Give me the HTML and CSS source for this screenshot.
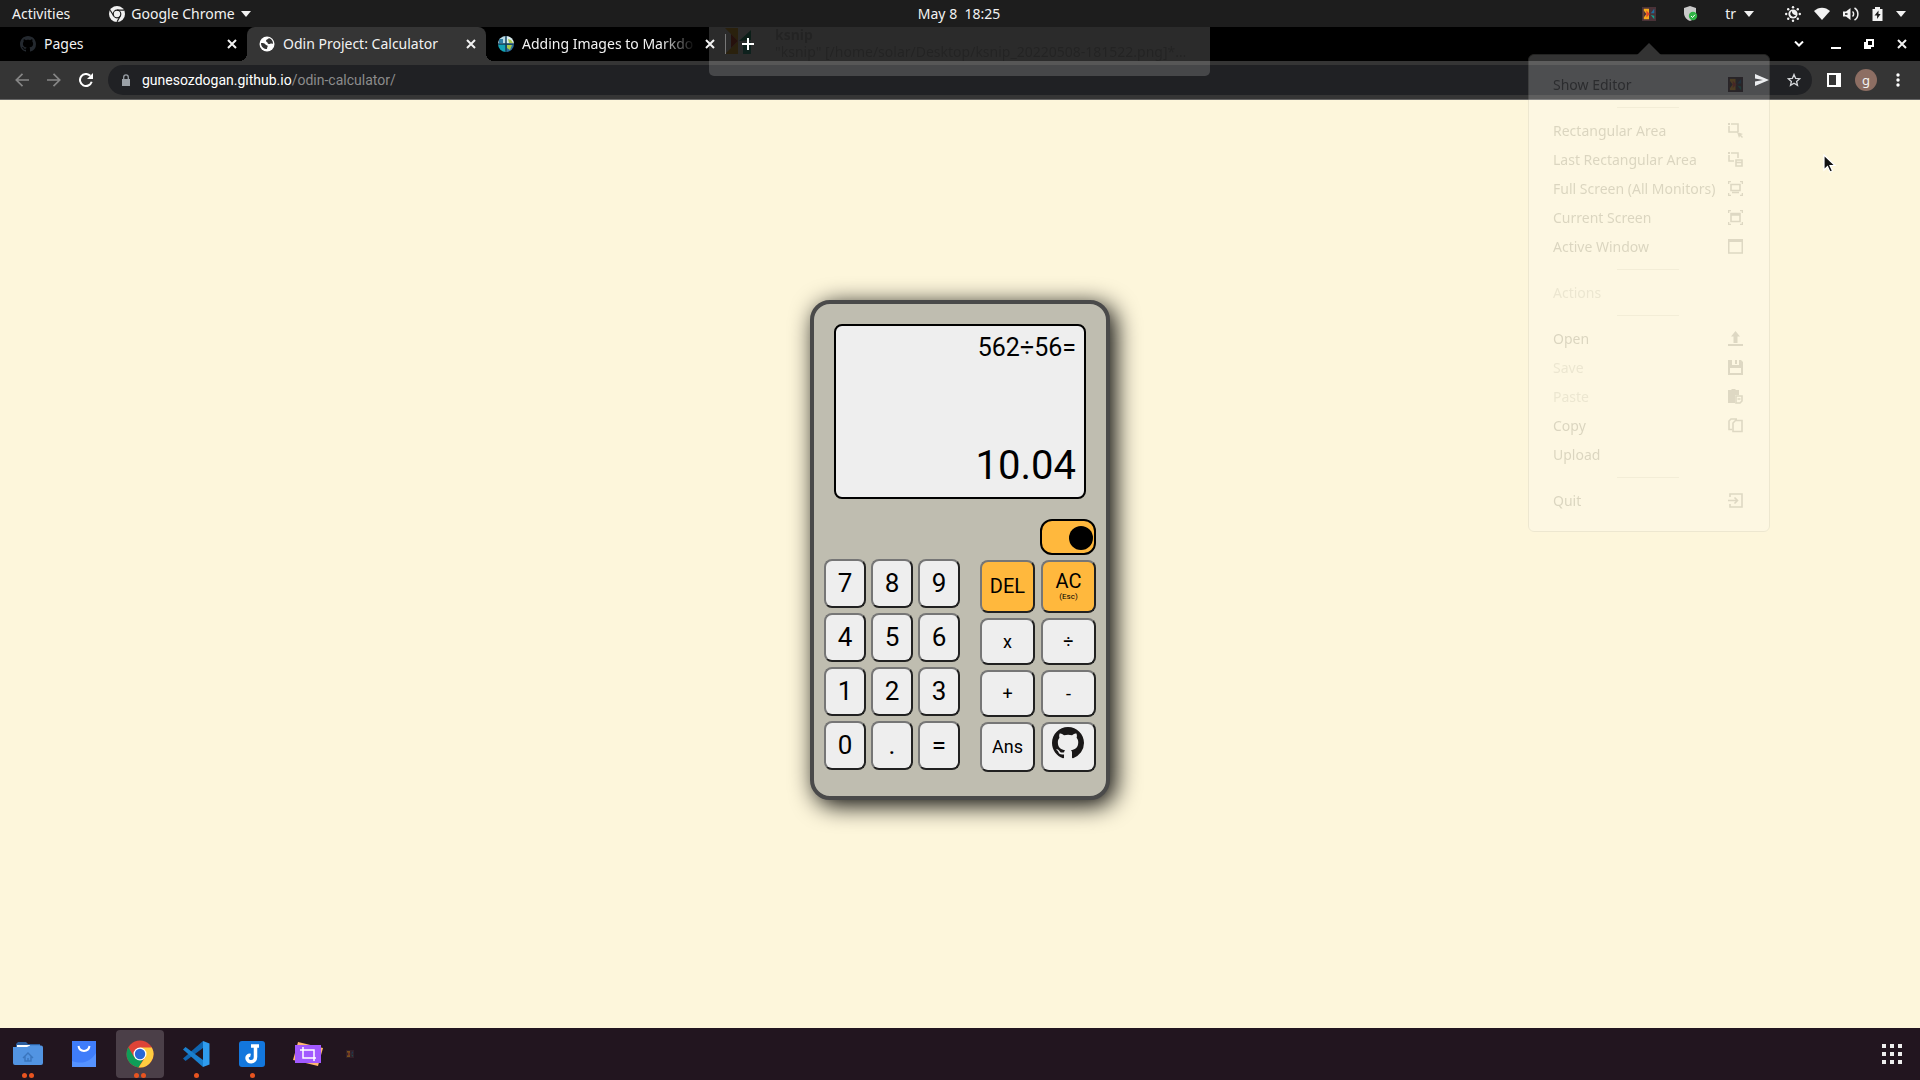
FILE: index.html
```html
<!DOCTYPE html>
<html lang="en">
<head>
<meta charset="utf-8">
<title>Odin Project: Calculator</title>
<link rel="stylesheet" href="styles.css">
</head>
<body>
<svg class="defs" aria-hidden="true">
  <defs>
    <symbol id="github" viewBox="0 0 16 16"><path d="M8 0C3.58 0 0 3.58 0 8c0 3.54 2.29 6.53 5.47 7.59.4.07.55-.17.55-.38 0-.19-.01-.82-.01-1.49-2.01.37-2.53-.49-2.69-.94-.09-.23-.48-.94-.82-1.13-.28-.15-.68-.52-.01-.53.63-.01 1.08.58 1.23.82.72 1.21 1.87.87 2.33.66.07-.52.28-.87.51-1.07-1.78-.2-3.64-.89-3.64-3.95 0-.87.31-1.59.82-2.15-.08-.2-.36-1.02.08-2.12 0 0 .67-.21 2.2.82.64-.18 1.32-.27 2-.27s1.36.09 2 .27c1.53-1.04 2.2-.82 2.2-.82.44 1.1.16 1.92.08 2.12.51.56.82 1.27.82 2.15 0 3.07-1.87 3.75-3.65 3.95.29.25.54.73.54 1.48 0 1.07-.01 1.93-.01 2.2 0 .21.15.46.55.38A8.01 8.01 0 0 0 16 8c0-4.42-3.58-8-8-8z"/></symbol>
    <symbol id="close" viewBox="0 0 10 10"><path d="M1 1l8 8M9 1l-8 8" fill="none" stroke="currentColor" stroke-width="2"/></symbol>
    <symbol id="caret" viewBox="0 0 10 6"><path d="M0 0h10L5 6z" fill="currentColor"/></symbol>
    <symbol id="ksnip" viewBox="0 0 16 16"><path fill="#4a3238" d="M0 0h16v16H0z"/><path fill="#f6a81c" d="M2 2h6v12H2z"/><path fill="#4a3238" d="M2 4l3 4-3 4z"/><path fill="#e2432a" d="M5 4l4 4-4 4z"/><path fill="#1d6f9e" d="M10 7l4-5v5z"/><path fill="#12a08c" d="M10 9l4 5v-4z"/></symbol>
  </defs>
</svg>

<header class="panel">
  <div class="panel-left">
    <button class="panel-item" type="button">Activities</button>
    <button class="panel-item app" type="button">
      <svg width="16" height="16" viewBox="0 0 16 16"><circle cx="8" cy="8" r="8" fill="#f2f2f2"/><g fill="none" stroke="#1d1d1d" stroke-width="1.2"><circle cx="8" cy="8" r="3.8"/><path d="M8 4.2h7M4.8 10L1.2 4.3M11.3 10L8 15.8"/></g></svg>
      Google Chrome
      <svg width="10" height="6"><use href="#caret"/></svg>
    </button>
  </div>
  <time class="clock">May 8&nbsp; 18:25</time>
  <div class="panel-right">
    <svg width="14" height="14"><use href="#ksnip"/></svg>
    <svg width="15" height="16" viewBox="0 0 15 16"><path fill="#c9c9c9" d="M7 0l6 2v5c0 4-3 7-6 8-3-1-6-4-6-8V2z"/><circle cx="10" cy="10" r="4.2" fill="#2fb344"/><path d="M8 10l1.5 1.500L12 8.700" fill="none" stroke="#fff"/></svg>
    <span class="lang">tr <svg width="10" height="6"><use href="#caret"/></svg></span>
    <span class="status">
      <svg width="16" height="16" viewBox="0 0 16 16"><circle cx="8" cy="8" r="4.600" fill="#f2f2f2"/><path d="M7 5a3 3 0 1 0 4 4 3.500 3.500 0 0 1-4-4z" fill="#1d1d1d"/><g fill="#f2f2f2"><circle cx="8" cy="1.200" r="1.200"/><circle cx="8" cy="14.800" r="1.200"/><circle cx="1.200" cy="8" r="1.200"/><circle cx="14.800" cy="8" r="1.200"/><circle cx="3.200" cy="3.200" r="1.200"/><circle cx="12.800" cy="12.800" r="1.200"/><circle cx="12.800" cy="3.200" r="1.200"/><circle cx="3.200" cy="12.800" r="1.200"/></g></svg>
      <svg width="16" height="14" viewBox="0 0 16 14"><path fill="#f2f2f2" d="M0 4c4.500-4.500 11.500-4.500 16 0L8 13z"/></svg>
      <svg width="16" height="14" viewBox="0 0 16 14"><path fill="#f2f2f2" d="M0 4.500h3L7.500 1v12L3 9.500H0z"/><path d="M2 6.200h2.500v1.600H2z" fill="#1d1d1d"/><path d="M9.500 4.500c1.500 1.200 1.500 3.800 0 5M11.500 1c4.500 2.500 4.500 9.500 0 12" fill="none" stroke="#f2f2f2" stroke-width="1.500"/></svg>
      <svg width="11" height="14" viewBox="0 0 11 14"><path fill="#f2f2f2" d="M3 0h5v2h2.500v12H.5V2H3z"/><path d="M6.500 3.500L2.500 8.500h2.600v3.500l3.500-5H6.500z" fill="#1d1d1d"/></svg>
      <svg width="10" height="6"><use href="#caret"/></svg>
    </span>
  </div>
</header>

<section class="browser">
  <nav class="tabs">
    <div class="tab">
      <svg class="favicon dim" width="16" height="16"><use href="#github"/></svg>
      <span class="tab-title">Pages</span>
      <button class="icon-btn" type="button" aria-label="Close Pages"><svg width="10" height="10"><use href="#close"/></svg></button>
    </div>
    <div class="tab active">
      <svg class="favicon" width="16" height="16" viewBox="0 0 16 16"><circle cx="8" cy="8" r="7.500" fill="#fff"/><path fill="#353535" d="M2 7c2 0 4 0 4.500 1.500.5 1 2 .5 2.200 1.600.1.900-.7 1.200-.7 2.900-3 0-6-2-6-6zM8 3.500c1-.5 1-1.500 2.500-1.300C12.500 3 14 5 14 7.500c-1 .5-2-.3-2.700.2-.9.600-2.500.3-2.700-.8C8.500 6 7 6 7 5c0-.7.4-1.200 1-1.500z"/></svg>
      <span class="tab-title">Odin Project: Calculator</span>
      <button class="icon-btn" type="button" aria-label="Close calculator"><svg width="10" height="10"><use href="#close"/></svg></button>
    </div>
    <div class="tab">
      <svg class="favicon" width="16" height="16" viewBox="0 0 16 16"><clipPath id="round"><circle cx="8" cy="8" r="8"/></clipPath><g clip-path="url(#round)"><path fill="#b9dbe6" d="M0 0h8v8H0z"/><path fill="#dceef2" d="M8 0h8v8H8z"/><path fill="#13a3b5" d="M0 8h8v8H0z"/><path fill="#2d6f9e" d="M8 8h8v8H8z"/><path d="M1 3h4v4H1z" fill="#2f7fa6"/><path fill="#a8c94a" d="M9 9l5 0-2 5-3-2zM10 3l3 1 2 3h-4z"/><path d="M0 8h16M8 0v16" stroke="#123f5a" stroke-width="1.500"/></g></svg>
      <span class="tab-title fade">Adding Images to Markdo</span>
      <button class="icon-btn" type="button" aria-label="Close Adding Images"><svg width="10" height="10"><use href="#close"/></svg></button>
    </div>
    <button class="icon-btn new-tab" type="button" aria-label="New tab"><svg width="12" height="12" viewBox="0 0 12 12"><path d="M6 0v12M0 6h12" stroke="#fff" stroke-width="2"/></svg></button>
    <div class="window-controls">
      <button class="icon-btn search-tabs" type="button" aria-label="Search tabs"><svg width="10" height="6" viewBox="0 0 10 6"><path d="M1 0.500l4 4 4-4" fill="none" stroke="#fff" stroke-width="2"/></svg></button>
      <button class="icon-btn" type="button" aria-label="Minimize"><svg width="10" height="10" viewBox="0 0 10 10"><path d="M0 9h10" stroke="#fff" stroke-width="2"/></svg></button>
      <button class="icon-btn" type="button" aria-label="Restore"><svg width="10" height="10" viewBox="0 0 10 10"><path d="M3 1h6v6H3zM1 3v6h6" fill="none" stroke="#fff" stroke-width="2"/></svg></button>
      <button class="icon-btn" type="button" aria-label="Close window"><svg width="10" height="10"><use href="#close"/></svg></button>
    </div>
  </nav>

  <div class="toolbar">
    <button class="icon-btn faded" type="button" aria-label="Back"><svg width="14" height="14" viewBox="0 0 14 14"><path d="M14 7H1.500M7.500 .8L1.300 7l6.200 6.200" fill="none" stroke="currentColor" stroke-width="1.700"/></svg></button>
    <button class="icon-btn faded" type="button" aria-label="Forward"><svg width="14" height="14" viewBox="0 0 14 14"><path d="M0 7h12.500M6.500 .8L12.700 7l-6.200 6.200" fill="none" stroke="currentColor" stroke-width="1.700"/></svg></button>
    <button class="icon-btn" type="button" aria-label="Reload"><svg width="14" height="14" viewBox="0 0 14 14"><path d="M12.700 8.800A6 6 0 1 1 11.300 2.800" fill="none" stroke="#fff" stroke-width="2"/><path d="M14 0v6H8z" fill="#fff"/></svg></button>
    <div class="address">
      <svg width="10" height="12" viewBox="0 0 10 12"><path d="M1 5h8v7H1z" fill="#9aa0a6"/><path d="M2.700 5V3.200a2.300 2.300 0 0 1 4.600 0V5" fill="none" stroke="#9aa0a6" stroke-width="1.300"/></svg>
      <a class="url" href="#calculator">gunesozdogan.github.io<span>/odin-calculator/</span></a>
      <button class="icon-btn" type="button" aria-label="Send"><svg width="14" height="12" viewBox="0 0 14 12"><path d="M0 0l14 6-14 6V7.500L8 6 0 4.500z" fill="#e8eaed"/></svg></button>
      <button class="icon-btn" type="button" aria-label="Bookmark"><svg width="14" height="14" viewBox="0 0 14 14"><path d="M7 1.500l1.600 3.800 4.100.4-3.100 2.700.9 4L7 10.300l-3.500 2.100.9-4L1.300 5.700l4.100-.4z" fill="none" stroke="#d5d7da" stroke-width="1.300"/></svg></button>
    </div>
    <div class="tools">
      <button class="icon-btn" type="button" aria-label="Side panel"><svg width="14" height="14" viewBox="0 0 14 14"><path d="M1 1h12v12H1z" fill="none" stroke="#fff" stroke-width="2"/><path d="M9 1h4v12H9z" fill="#fff"/></svg></button>
      <button class="avatar" type="button">g</button>
      <button class="icon-btn" type="button" aria-label="Menu"><svg width="4" height="14" viewBox="0 0 4 14"><g fill="#fff"><circle cx="2" cy="2" r="1.700"/><circle cx="2" cy="7" r="1.700"/><circle cx="2" cy="12" r="1.700"/></g></svg></button>
    </div>
  </div>
</section>

<main class="page" id="calculator">
  <div class="calculator">
    <div class="screen">
      <output class="expression">562÷56=</output>
      <output class="result">10.04</output>
    </div>
    <div class="switch-row"><input class="switch" type="checkbox" checked aria-label="Theme"></div>
    <div class="keys">
      <div class="digits">
        <button type="button">7</button><button type="button">8</button><button type="button">9</button>
        <button type="button">4</button><button type="button">5</button><button type="button">6</button>
        <button type="button">1</button><button type="button">2</button><button type="button">3</button>
        <button type="button">0</button><button type="button">.</button><button type="button">=</button>
      </div>
      <div class="operators">
        <button class="clear" type="button">DEL</button><button class="clear" type="button">AC<small>(Esc)</small></button>
        <button type="button">x</button><button type="button">÷</button>
        <button type="button">+</button><button type="button">-</button>
        <button type="button">Ans</button><button class="repo" type="button" aria-label="GitHub"><svg width="32" height="32" fill="#191717"><use href="#github"/></svg></button>
      </div>
    </div>
  </div>
</main>

<footer class="dock">
  <button class="launcher" type="button" aria-label="Files">
    <svg width="30" height="26" viewBox="0 0 30 26"><path fill="#2c5e9e" d="M5 1h8l2 2h12v6H3V3z"/><path fill="#fff" d="M4 4h22v4H4z"/><path fill="#3f7fc9" d="M17 4h10v2H17z"/><path fill="#5294e2" d="M0 6h14l3-1.500h11a2 2 0 0 1 2 2V22a2 2 0 0 1-2 2H2a2 2 0 0 1-2-2z"/><path d="M10 17l5-5 5 5M12 15.500V20h6v-4.500M15 20v-3" fill="none" stroke="#3a75bd" stroke-width="1.400"/></svg>
    <i></i><i></i>
  </button>
  <button class="launcher" type="button" aria-label="Software">
    <svg width="24" height="26" viewBox="0 0 24 26"><path fill="#3f7dfa" d="M0 0h24v26H0z"/><path fill="#5592ff" d="M0 20c11 4 19 0 24-8v14H0z"/><path d="M6.500 5c1 6.500 10 6.500 11 0" fill="none" stroke="#fff" stroke-width="2"/></svg>
  </button>
  <button class="launcher current" type="button" aria-label="Google Chrome">
    <svg width="28" height="28" viewBox="0 0 28 28"><circle cx="14" cy="14" r="13.500" fill="#dd4437"/><path fill="#0f9d58" d="M2.300 7.200L8.200 17.300 14 20l3 0-4.500 7.400A13.500 13.500 0 0 1 2.300 7.200z"/><path fill="#ffcd40" d="M14 7.500h11.800A13.500 13.500 0 0 1 12.500 27.400l7-10.500z"/><circle cx="14" cy="14" r="6.500" fill="#fff"/><circle cx="14" cy="14" r="5.200" fill="#2966d6"/></svg>
    <i></i><i></i>
  </button>
  <button class="launcher" type="button" aria-label="Visual Studio Code">
    <svg width="27" height="26" viewBox="0 0 27 26"><path fill="#0f65b0" d="M20 0L0 17.500 2.500 20 20 7z"/><path fill="#1a80cf" d="M20 26L0 8.500 2.500 6 20 19z"/><path fill="#2f9cee" d="M20 0l6.500 2.500v21L20 26z"/></svg>
    <i></i>
  </button>
  <button class="launcher" type="button" aria-label="Joplin">
    <svg width="26" height="26" viewBox="0 0 26 26"><rect width="26" height="26" rx="3" fill="#1377dd"/><path d="M12 5h8M16.500 5v11c0 6.500-8.500 6-8.500 1 0-2 1.500-3 3.500-2.500" fill="none" stroke="#fff" stroke-width="3.500"/></svg>
    <i></i>
  </button>
  <button class="launcher" type="button" aria-label="Screenshot">
    <svg width="30" height="26" viewBox="0 0 30 26"><path fill="#ffb871" d="M5 1l25 6-5 18L0 19z"/><path fill="#a259ff" d="M2 4h26v18H2z"/><path d="M7 9h14v11M10 6v11h13" fill="none" stroke="#fff" stroke-width="1.500"/></svg>
  </button>
  <svg class="starting" width="8" height="8"><use href="#ksnip"/></svg>
  <button class="apps" type="button" aria-label="Show applications">
    <svg width="20" height="20" viewBox="0 0 20 20"><path fill="#eee" d="M0 0h4v4H0zM8 0h4v4H8zM16 0h4v4h-4zM0 8h4v4H0zM8 8h4v4H8zM16 8h4v4h-4zM0 16h4v4H0zM8 16h4v4H8zM16 16h4v4h-4z"/></svg>
  </button>
</footer>

<!-- Fading desktop overlays -->
<aside class="toast">
  <svg width="26" height="26" viewBox="0 0 26 26"><path fill="#f6c04c" d="M0 0h13v13zM0 26h13V13z"/><path fill="#e2634a" d="M6 6l7 7-7 7z"/><path fill="#4bb08e" d="M14 13L26 2v10z"/><path fill="#52c0ac" d="M18 15l8-1v12h-8z"/></svg>
  <div><b>ksnip</b><p>"ksnip" [/home/solar/Desktop/ksnip_20220508-181522.png]*…</p></div>
</aside>

<aside class="tray-menu">
  <ul>
    <li>Show Editor <svg width="15" height="15"><use href="#ksnip"/></svg></li>
    <li class="sep"></li>
    <li>Rectangular Area <svg viewBox="0 0 15 15"><path d="M1 3v6h9M3 1h7v8" class="ln"/><path d="M9 9l6 2-2 1 2 2-1 1-2-2-1 2zM0 0h2v2H0z"/></svg></li>
    <li>Last Rectangular Area <svg viewBox="0 0 15 15"><path d="M1 3v6h5M3 1h7v5" class="ln"/><path d="M8 8v6h6V8zM8 10.500h6" class="ln"/><path d="M0 0h2v2H0z"/></svg></li>
    <li>Full Screen (All Monitors) <svg viewBox="0 0 15 15"><path d="M3 3.500h9v6H3zM4 11.500h7M.5 3V.5H3M12 .5h2.500V3M.5 12v2.500H3M12 14.500h2.500V12" class="ln"/></svg></li>
    <li>Current Screen <svg viewBox="0 0 15 15"><path d="M3 3.500h9v8H3zM.5 3V.5H3M12 .5h2.500V3M.5 12v2.500H3M12 14.500h2.500V12M3 5h9" class="ln"/></svg></li>
    <li>Active Window <svg viewBox="0 0 15 15"><path d="M.7 1h13.600v13H.7z" class="ln"/><path d="M0 0h15v3H0z"/></svg></li>
    <li class="sep"></li>
    <li class="off">Actions</li>
    <li class="sep"></li>
    <li>Open <svg viewBox="0 0 15 15"><path d="M7.500 0L12 5.500H9.500V12h-4V5.500H3zM0 13h15v2H0z"/></svg></li>
    <li class="off">Save <svg viewBox="0 0 15 15"><path d="M0 0h4v5h7V0h2l2 2v13H0zM2 8v5h11V8z" fill-rule="evenodd"/><path d="M7 0h2v4H7z"/></svg></li>
    <li class="off">Paste <svg viewBox="0 0 15 15"><path d="M0 1h3l1-1h3l1 1h3v5H7v8H0z"/><path d="M8 7h6v5l-2 2H8zM9.500 10h3" class="ln"/></svg></li>
    <li>Copy <svg viewBox="0 0 15 15"><path d="M5 13.500V5l2.500-2.500h6.500v11zM4 11.500H1V3l2-2h6" class="ln"/></svg></li>
    <li>Upload</li>
    <li class="sep"></li>
    <li>Quit <svg viewBox="0 0 15 15"><path d="M2 4V1h12v13H2v-3M0 7.500h9M6.500 4.500l3 3-3 3" class="ln"/></svg></li>
  </ul>
</aside>

<svg class="pointer" width="14" height="20" viewBox="0 0 14 20"><path d="M1 1v15l3.500-3.500L7 18l2.500-1.200L7 11.500h5z" fill="#111" stroke="#fff" stroke-width="1.200"/></svg>
</body>
</html>
```
FILE: styles.css
```css
* { box-sizing: border-box; }

body {
  margin: 0;
  min-height: 100vh;
  display: flex;
  flex-direction: column;
  position: relative;
  background: #fdf6db;
  color: #f2f2f2;
  font: 14px/20px "Noto Sans", "Liberation Sans", sans-serif;
}

button { margin: 0; padding: 0; border: 0; background: none; color: inherit; font: inherit; }
svg { display: block; flex: none; }
.defs { position: absolute; width: 0; height: 0; }

/* Desktop panel */
.panel {
  display: grid;
  grid-template-columns: 1fr auto 1fr;
  align-items: center;
  height: 27px;
  padding: 0 14px 0 12px;
  background: #1d1d1d;
}
.panel-left, .panel-right, .panel-item, .lang, .status { display: flex; align-items: center; }
.panel-left { gap: 39px; }
.panel-item { gap: 6px; }
.panel-right { justify-content: flex-end; gap: 27px; }
.lang { gap: 8px; }
.status { gap: 13px; margin-left: 4px; }

/* Tab strip */
.tabs { display: flex; height: 34px; padding-left: 8px; background: #000; }
.tab { position: relative; display: flex; align-items: center; gap: 8px; width: 239px; padding: 0 8px 0 12px; }
.tab.active { background: #353535; border-radius: 8px 8px 0 0; }
.tab.active::before, .tab.active::after {
  content: "";
  position: absolute;
  bottom: 0;
  width: 8px;
  height: 8px;
}
.tab.active::before { left: -8px; background: radial-gradient(circle at 0 0, #000 8px, #353535 8px); }
.tab.active::after { right: -8px; background: radial-gradient(circle at 100% 0, #000 8px, #353535 8px); }
.tab-title { flex: 1; white-space: nowrap; }
.fade { mask-image: linear-gradient(to right, #000 80%, transparent); }
.dim { fill: #24292f; }
.icon-btn { display: flex; align-items: center; justify-content: center; min-width: 14px; }
.new-tab {
  position: relative;
  z-index: 2;
  align-self: center;
  height: 20px;
  padding-left: 16px;
  border-left: 1px solid #777;
}
.window-controls { display: flex; align-items: center; gap: 19px; margin-left: auto; padding-right: 11px; }
.search-tabs { margin-right: 4px; }

/* Toolbar */
.toolbar {
  display: flex;
  align-items: center;
  gap: 18px;
  height: 39px;
  padding: 0 20px 0 15px;
  background: #353535;
  border-bottom: 1px solid #666;
}
.faded { color: #868686; }
.address {
  flex: 1;
  display: flex;
  align-items: center;
  gap: 18px;
  height: 30px;
  margin-left: -3px;
  padding: 0 11px 0 13px;
  border-radius: 15px;
  background: #202124;
}
.url { flex: 1; margin-left: -7px; color: #fff; text-decoration: none; font: 14px/20px Roboto, "Noto Sans", sans-serif; }
.url span { color: #8c8c8c; }
.tools { display: flex; align-items: center; gap: 14px; margin-left: -3px; }
.tools .icon-btn:last-child { min-width: 4px; margin-left: 5px; }
.avatar { width: 22px; height: 22px; border-radius: 50%; background: #8d6e63; font-size: 13px; line-height: 20px; }

/* Calculator page */
.page {
  flex: 1;
  display: flex;
  align-items: center;
  justify-content: center;
  padding-bottom: 28px;
  color: #000;
  font-family: Roboto, sans-serif;
}
.calculator {
  width: 300px;
  padding: 20px 10px 24px;
  border: 4px solid #4a4a4a;
  border-radius: 20px;
  background: #bfbdb0;
  box-shadow: 5px 5px 25px #000;
}
.screen {
  display: flex;
  flex-direction: column;
  justify-content: space-between;
  align-items: flex-end;
  height: 175px;
  margin: 0 10px;
  padding: 7px 8px;
  border: 2px solid #000;
  border-radius: 8px;
  background: #eee;
}
.expression { font-size: 25px; line-height: 30px; }
.result { font-size: 40px; line-height: 48px; }
.switch-row { display: flex; justify-content: flex-end; padding: 20px 0 4px; }
.switch {
  appearance: none;
  width: 56px;
  height: 36px;
  margin: 0;
  padding: 5px 1px;
  border: 2px solid #000;
  border-radius: 12px;
  background: #ffb83d;
}
.switch::before { content: ""; display: block; width: 24px; height: 24px; border-radius: 50%; background: #000; }
.switch:checked::before { margin-left: auto; }
.keys { display: flex; justify-content: space-between; align-items: flex-start; }
.digits { display: grid; grid-template-columns: repeat(3, 42px); grid-auto-rows: 49px; gap: 5px; }
.operators { display: grid; grid-template: 53px 47px 47px 50px / 55px 55px; gap: 5px 6px; padding-top: 1px; }
.keys button {
  border: 2px solid;
  border-color: #767676 #212121 #212121 #767676;
  border-radius: 8px;
  background: #eee;
}
.digits button { padding-bottom: 2px; font-size: 26px; line-height: 30px; }
.operators button { font-size: 18px; line-height: 22px; }
.operators .clear { padding-bottom: 1px; background: #ffb83d; font-size: 20px; }
.clear small { display: block; font-size: 8px; line-height: 10px; }
.operators .repo { display: flex; justify-content: center; padding: 3px 1px 0 0; }

/* Dock */
.dock { display: flex; align-items: center; gap: 8px; height: 52px; padding: 0 18px 0 4px; background: #22151f; }
.launcher {
  position: relative;
  display: flex;
  align-items: center;
  justify-content: center;
  width: 48px;
  height: 48px;
  border-radius: 4px;
}
.launcher.current { background: #4b3f48; }
.launcher i { position: absolute; bottom: 0; left: 22px; width: 5px; height: 5px; border-radius: 50%; background: #e95420; }
.launcher i:nth-of-type(1):not(:last-child) { left: 18px; }
.launcher i:nth-of-type(2) { left: 25px; }
.starting { margin-left: 6px; opacity: .4; }
.apps { margin-left: auto; }

/* Notification fading out */
.toast {
  position: absolute;
  z-index: 1;
  top: 27px;
  left: calc(50% - 251px);
  display: flex;
  gap: 24px;
  width: 501px;
  height: 49px;
  padding: 1px 16px;
  border-radius: 0 0 5px 5px;
  background: #fff;
  color: #d0d0d0;
  opacity: .17;
  pointer-events: none;
}
.toast b, .toast p { display: block; margin: 0; white-space: nowrap; font-weight: 400; }
.toast b { font-weight: 700; line-height: 14px; }
.toast p { line-height: 20px; }

/* Tray menu fading out */
.tray-menu {
  position: absolute;
  z-index: 1;
  top: 54px;
  right: 150px;
  width: 242px;
  border: 1px solid #b0b0a8;
  border-radius: 6px;
  background: #fff;
  color: #585858;
  opacity: .2;
}
.tray-menu::before {
  content: "";
  position: absolute;
  top: -12px;
  left: 108px;
  border: solid transparent;
  border-width: 0 12px 12px;
  border-bottom-color: #fff;
}
.tray-menu ul { margin: 0; padding: 15px 26px 16px 24px; list-style: none; }
.tray-menu li { display: flex; align-items: center; justify-content: space-between; height: 29px; white-space: nowrap; }
.tray-menu .sep { width: 62px; height: 17px; margin: 0 auto; }
.tray-menu .sep::before { content: ""; flex: 1; border-top: 1px solid #ccc; }
.tray-menu .off { color: #aaa; }
.tray-menu li svg { width: 15px; height: 15px; fill: #666; }
.tray-menu .ln { fill: none; stroke: #666; stroke-width: 1.6; }

.pointer { position: absolute; top: 154px; right: 83px; }
```
